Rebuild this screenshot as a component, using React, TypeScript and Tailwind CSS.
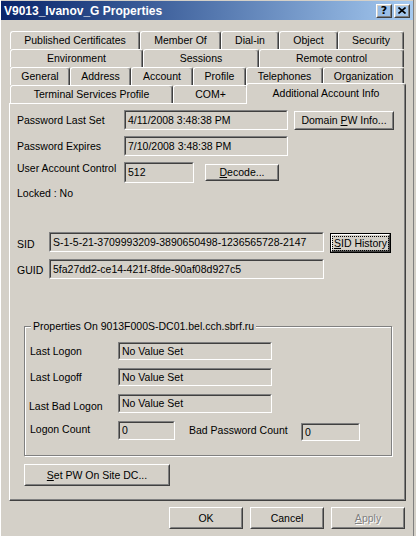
import React from 'react';

type Kids = { className?: string; children?: React.ReactNode };

// classic raised 3d edge
const Raised = ({ className = '', children }: Kids) => (
  <div className={`border border-t-white border-l-white border-b-[#404040] border-r-[#404040] ${className}`}>
    <div className="h-full w-full border border-t-[#d4d0c8] border-l-[#d4d0c8] border-b-[#808080] border-r-[#808080] flex items-center justify-center whitespace-nowrap">
      {children}
    </div>
  </div>
);

// read-only sunken edit box
const Field = ({ className = '', children }: Kids) => (
  <div className={`border border-t-[#808080] border-l-[#808080] border-b-white border-r-white ${className}`}>
    <div className="h-full border border-t-[#404040] border-l-[#404040] border-b-[#d4d0c8] border-r-[#d4d0c8] flex items-center pl-[2px] whitespace-nowrap overflow-hidden">
      {children}
    </div>
  </div>
);

const Tab = ({ className = '', children }: Kids) => (
  <div
    className={`h-[18px] flex items-center justify-center whitespace-nowrap border-t border-l border-r border-t-white border-l-white border-r-[#404040] rounded-t-[3px] shadow-[inset_-1px_0_0_#808080] ${className}`}
  >
    {children}
  </div>
);

const U = ({ children }: Kids) => <span className="underline underline-offset-[1px]">{children}</span>;

export default function App() {
  return (
    <div className="w-[416px] h-[536px] overflow-hidden bg-[#d4d0c8] border-l border-l-white pr-[2px] font-['Liberation_Sans',Arial,sans-serif] text-[10.5px] leading-[13px] text-black">
      <div className="h-full border-r border-r-[#808080] flex flex-col">
        {/* title bar */}
        <div className="mt-[1px] h-[19px] flex items-center justify-between bg-gradient-to-r from-[#0a246a] to-[#a6caf0] pl-[3px] pr-[3px]">
          <span className="text-white font-bold text-[12px] leading-[14px]">V9013_Ivanov_G Properties</span>
          <div className="flex gap-[2px]">
            <Raised className="w-[16px] h-[14px]">
              <span className="font-bold text-[11px] leading-[11px] font-['DejaVu_Sans',sans-serif]">?</span>
            </Raised>
            <Raised className="w-[16px] h-[14px]">
              <svg width="8" height="7" viewBox="0 0 8 7">
                <path d="M0.5 0.5 L7.5 6.5 M7.5 0.5 L0.5 6.5" stroke="black" strokeWidth="1.6" />
              </svg>
            </Raised>
          </div>
        </div>

        {/* tabs */}
        <div className="mt-[11px] ml-[9px] flex flex-col">
          <div className="flex">
            <Tab className="w-[130px]">Published Certificates</Tab>
            <Tab className="w-[81px]">Member Of</Tab>
            <Tab className="w-[58px]">Dial-in</Tab>
            <Tab className="w-[59px]">Object</Tab>
            <Tab className="w-[66px]">Security</Tab>
          </div>
          <div className="flex">
            <Tab className="w-[133px]">Environment</Tab>
            <Tab className="w-[116px]">Sessions</Tab>
            <Tab className="w-[145px]">Remote control</Tab>
          </div>
          <div className="flex">
            <Tab className="w-[60px]">General</Tab>
            <Tab className="w-[61px]">Address</Tab>
            <Tab className="w-[62px]">Account</Tab>
            <Tab className="w-[53px]">Profile</Tab>
            <Tab className="w-[77px]">Telephones</Tab>
            <Tab className="w-[81px]">Organization</Tab>
          </div>
          <div className="flex items-end h-[18px]">
            <Tab className="w-[163px]">Terminal Services Profile</Tab>
            <Tab className="w-[75px]">COM+</Tab>
            <div className="relative z-10 -ml-[2px] -mb-[1px] w-[160px] h-[21px] bg-[#d4d0c8] flex justify-center pt-[3px] border-t border-l border-r border-t-white border-l-white border-r-[#404040] rounded-t-[3px] shadow-[inset_-1px_0_0_#808080]">
              Additional Account Info
            </div>
          </div>
        </div>

        {/* tab page */}
        <div className="ml-[8px] w-[397px] h-[398px] border border-t-white border-l-white border-b-[#404040] border-r-[#404040]">
          <div className="h-full border-r border-b border-[#808080] pl-[7px] flex flex-col">
            <div className="mt-[6px] flex items-center">
              <span className="w-[107px]">Password Last Set</span>
              <Field className="w-[164px] h-[20px]">4/11/2008 3:48:38 PM</Field>
              <Raised className="ml-[6px] w-[100px] h-[19px]">
                <span>Domain <U>P</U>W Info...</span>
              </Raised>
            </div>
            <div className="mt-[6px] flex items-center">
              <span className="w-[107px]">Password Expires</span>
              <Field className="w-[164px] h-[20px]">7/10/2008 3:48:38 PM</Field>
            </div>
            <div className="mt-[6px] flex items-start">
              <span className="w-[107px]">User Account Control</span>
              <Field className="w-[70px] h-[21px]">512</Field>
              <Raised className="ml-[11px] mt-[2px] w-[74px] h-[17px]">
                <span><U>D</U>ecode...</span>
              </Raised>
            </div>
            <div className="mt-[4px]">Locked : No</div>

            <div className="mt-[32px] flex items-start">
              <span className="w-[32px] mt-[6px]">SID</span>
              <Field className="w-[275px] h-[20px]">S-1-5-21-3709993209-3890650498-1236565728-2147</Field>
              <div className="ml-[6px] mt-[1px] w-[61px] h-[20px] border border-black">
                <Raised className="w-full h-full">
                  <span className="px-[1px] outline outline-1 outline-dotted outline-black">
                    <U>S</U>ID History
                  </span>
                </Raised>
              </div>
            </div>
            <div className="mt-[6px] flex items-start">
              <span className="w-[32px] mt-[5px]">GUID</span>
              <Field className="w-[275px] h-[20px]">5fa27dd2-ce14-421f-8fde-90af08d927c5</Field>
            </div>

            {/* group box */}
            <div className="relative ml-[7px] mt-[47px] w-[368px] h-[130px] border border-[#808080] shadow-[inset_1px_1px_0_#ffffff,1px_1px_0_#ffffff]">
              <span className="absolute -top-[7px] left-[6px] px-[2px] bg-[#d4d0c8] whitespace-nowrap">
                Properties On 9013F000S-DC01.bel.cch.sbrf.ru
              </span>
              <div className="pl-[5px] flex flex-col">
                <div className="mt-[15px] flex items-center">
                  <span className="w-[88px] mt-[1px]">Last Logon</span>
                  <Field className="w-[154px] h-[18px]">No Value Set</Field>
                </div>
                <div className="mt-[8px] flex items-center">
                  <span className="w-[88px] mt-[1px]">Last Logoff</span>
                  <Field className="w-[154px] h-[18px]">No Value Set</Field>
                </div>
                <div className="mt-[8px] flex items-start">
                  <span className="w-[88px] mt-[6px] -ml-[1px] pl-0">Last Bad Logon</span>
                  <Field className="ml-[1px] w-[154px] h-[19px]">No Value Set</Field>
                </div>
                <div className="mt-[8px] flex items-start">
                  <span className="w-[88px] mt-[2px]">Logon Count</span>
                  <Field className="w-[57px] h-[19px]">0</Field>
                  <span className="ml-[14px] w-[112px] mt-[3px]">Bad Password Count</span>
                  <Field className="mt-[2px] w-[59px] h-[18px]">0</Field>
                </div>
              </div>
            </div>

            <Raised className="ml-[7px] mt-[8px] w-[146px] h-[22px]">
              <span><U>S</U>et PW On Site DC...</span>
            </Raised>
          </div>
        </div>

        {/* dialog buttons */}
        <div className="mt-[6px] ml-[168px] flex gap-[7px]">
          <Raised className="w-[74px] h-[22px]">OK</Raised>
          <Raised className="w-[74px] h-[22px]">Cancel</Raised>
          <Raised className="w-[74px] h-[22px]">
            <span className="text-[#808080] [text-shadow:1px_1px_0_#ffffff]">
              <U>A</U>pply
            </span>
          </Raised>
        </div>
      </div>
    </div>
  );
}
